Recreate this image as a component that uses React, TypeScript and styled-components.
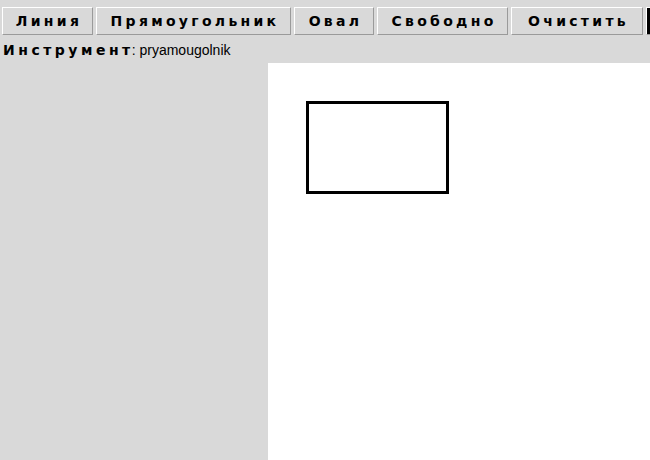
import styled, { createGlobalStyle } from 'styled-components';

const GlobalStyle = createGlobalStyle`
  html, body {
    margin: 0;
    padding: 0;
    background: #d9d9d9;
    overflow: hidden;
  }
  #root {
    width: 650px;
    height: 460px;
  }
`;

const Window = styled.div`
  display: flex;
  flex-direction: column;
  width: 650px;
  height: 460px;
  background: #d9d9d9;
`;

const Toolbar = styled.div`
  display: flex;
  gap: 3px;
  padding: 7px 0 0 2px;
  white-space: nowrap;
  overflow: hidden;
`;

const ToolButton = styled.button<{ $w: number; $dark?: boolean }>`
  flex: 0 0 auto;
  width: ${p => p.$w}px;
  height: 28px;
  margin: 0;
  padding: 0 0 0 3px;
  background: ${p => (p.$dark ? '#000' : '#d9d9d9')};
  border: 1px solid;
  border-color: #ffffff #9a9a9a #9a9a9a #ffffff;
  font-family: "DejaVu Sans", "Liberation Sans", sans-serif;
  font-weight: 900;
  font-size: 14px;
  letter-spacing: 3.3px;
  color: #000;
  text-align: center;
`;

const Status = styled.div`
  display: flex;
  align-items: baseline;
  height: 28px;
  padding: 7px 0 0 3px;
  box-sizing: border-box;
`;

const StatusLabel = styled.span`
  font-family: "DejaVu Sans", "Liberation Sans", sans-serif;
  font-weight: 900;
  font-size: 14px;
  letter-spacing: 3.5px;
`;

const StatusValue = styled.span`
  font-family: "Liberation Sans", Arial, sans-serif;
  font-size: 14px;
  margin-left: -2px;
`;

const Body = styled.div`
  flex: 1;
  display: flex;
`;

const Side = styled.div`
  width: 268px;
  flex: 0 0 auto;
`;

const Canvas = styled.div`
  flex: 1;
  background: #fff;
  padding: 38px 0 0 38px;
`;

const Shape = styled.div`
  width: 137px;
  height: 87px;
  border: 3px solid #000;
`;

const tools = [
  { label: 'Линия', w: 91 },
  { label: 'Прямоугольник', w: 195 },
  { label: 'Овал', w: 80 },
  { label: 'Свободно', w: 131 },
  { label: 'Очистить', w: 132 },
];

export default function App() {
  return (
    <>
      <GlobalStyle />
      <Window>
        <Toolbar>
          {tools.map(t => (
            <ToolButton key={t.label} $w={t.w}>{t.label}</ToolButton>
          ))}
          <ToolButton $w={40} $dark />
        </Toolbar>
        <Status>
          <StatusLabel>Инструмент</StatusLabel>
          <StatusValue>: pryamougolnik</StatusValue>
        </Status>
        <Body>
          <Side />
          <Canvas>
            <Shape />
          </Canvas>
        </Body>
      </Window>
    </>
  );
}
